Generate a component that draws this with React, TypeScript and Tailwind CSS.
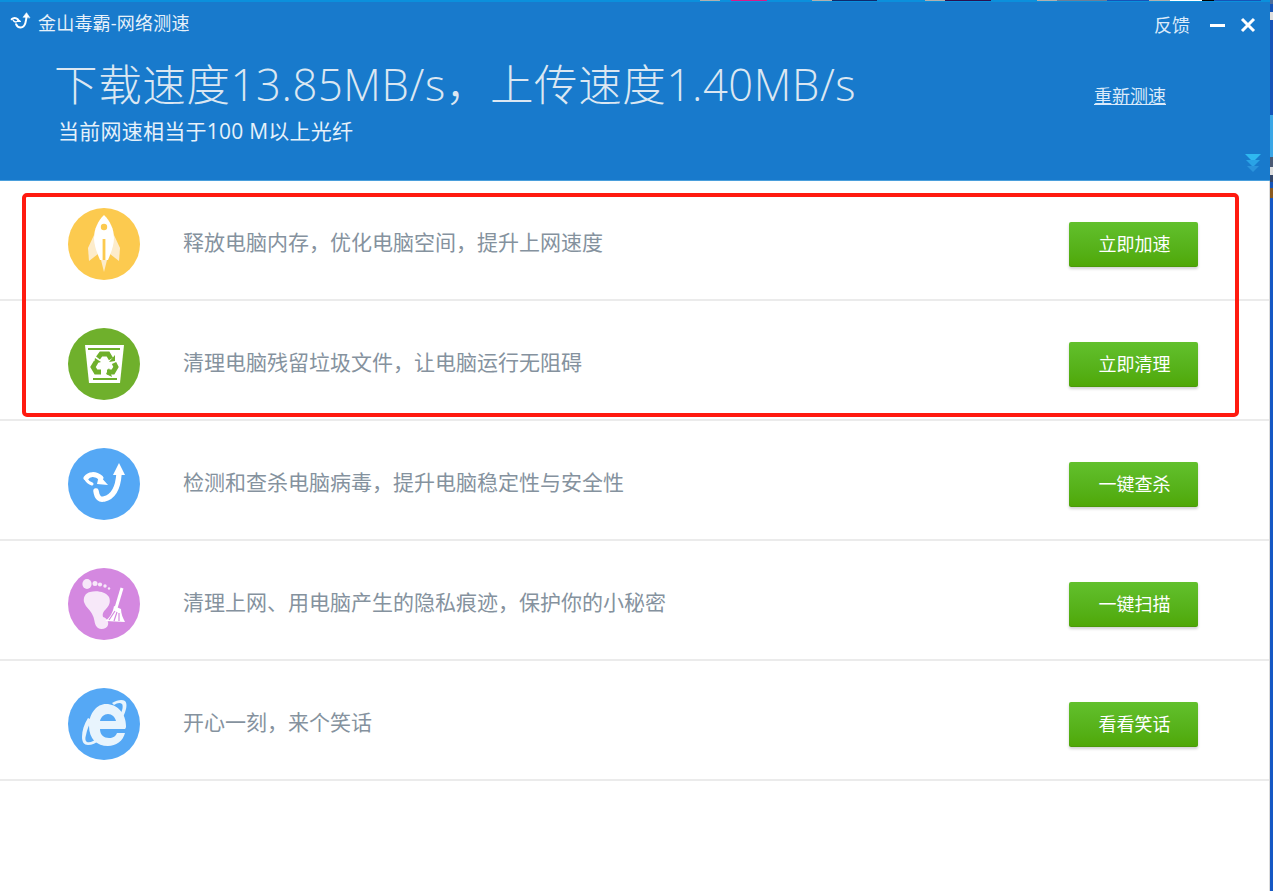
const FONT = "font-['Open_Sans','Noto_Sans_CJK_SC',sans-serif]";

function LogoMark({ className }: { className: string }) {
  return (
    <svg viewBox="0 0 40 40" className={className} fill="none" stroke="currentColor" strokeLinecap="round" strokeLinejoin="round">
      <path d="M3 15c3-3 8-3 11 0" strokeWidth="3.6" />
      <path d="M14 15l5 4-7 0" strokeWidth="2" fill="currentColor" />
      <path d="M6 17c1 2 3 3 5 3" strokeWidth="2.6" />
      <path d="M11 24c3 8 14 9 17-2 1-4 2-8 2-13" strokeWidth="3.6" />
      <path d="M24 11l6-8 6 9z" fill="currentColor" strokeWidth="1" />
    </svg>
  );
}

function RocketIcon() {
  return (
    <svg viewBox="0 0 72 72" className="h-full w-full">
      <path d="M26 27l-6 13 1 13 9-7z" fill="#fdeccb" />
      <path d="M46 27l6 13-1 13-9-7z" fill="#fdeccb" />
      <path d="M33 52h6l-3 12z" fill="#fdeccb" />
      <path d="M36 7c-6 6-10 14-10 23 0 7 3 15 6 22h8c3-7 6-15 6-22 0-9-4-17-10-23z" fill="#fff" />
      <circle cx="36" cy="19" r="3.2" fill="#fcca4f" />
      <rect x="34.6" y="31" width="2.8" height="21" fill="#fcca4f" />
    </svg>
  );
}

function TrashIcon() {
  return (
    <svg viewBox="0 0 72 72" className="h-full w-full">
      <path d="M17 17h39l-4 38H21z" fill="#fff" />
      <rect x="20" y="20" width="32" height="2" fill="#6fb02c" />
      <rect x="25" y="50" width="24" height="2" fill="#6fb02c" />
      <g transform="translate(0 -2)">
        <g fill="none" stroke="#6fb02c" strokeWidth="4.8">
          <path d="M30 32l3-4h7l3 5" />
          <path d="M46 37l2 4-3 5h-6" />
          <path d="M33 46h-5l-3-5 3-5" />
        </g>
        <g fill="#6fb02c">
          <path d="M41 36l6-1 0-6z" />
          <path d="M41 42l-3 6 6 3z" />
          <path d="M27 32l6 4-7 2z" />
        </g>
      </g>
    </svg>
  );
}

function HookIcon() {
  return (
    <svg viewBox="0 0 72 72" className="h-full w-full text-white">
      <g fill="none" stroke="currentColor" strokeLinecap="round">
        <path d="M18 30c3-4 9-5 15 0" strokeWidth="5" />
        <path d="M18 31c1 2 3 4 6 5" strokeWidth="3" />
        <path d="M28 43c1 7 4 9 8 8 9-2 14-11 15-25" strokeWidth="5.4" />
      </g>
      <path d="M31 27l9 10-11-1z" fill="currentColor" />
      <path d="M45 27l6-12 6 12z" fill="currentColor" />
    </svg>
  );
}

function FootIcon() {
  return (
    <svg viewBox="0 0 72 72" className="h-full w-full">
      <g fill="#f7e8f9">
        <path d="M22 24c7-2 16 0 19 5 2 5 0 9-3 12-3 3-4 5-3 8 4 1 6 5 5 8-1 4-7 5-10 3-4-3-3-8-5-12-2-6-7-8-9-14-1-4 1-9 6-10z" />
        <ellipse cx="19" cy="16" rx="4.6" ry="5" />
        <circle cx="27" cy="15.5" r="2.5" />
        <circle cx="32" cy="16.5" r="2.1" />
        <circle cx="37" cy="18" r="1.7" />
        <circle cx="41" cy="20.5" r="1.2" />
      </g>
      <path d="M54 20l-6 20" stroke="#fff" strokeWidth="3" />
      <path d="M46 38l7 3c0 5 2 9 4 13l-20-1c5-3 8-9 9-15z" fill="#fff" />
      <path d="M47 43l-6 9M49 44l-3 9M51 45l0 8" stroke="#d488e0" strokeWidth="1.2" />
    </svg>
  );
}

function IeIcon() {
  return (
    <svg viewBox="0 0 72 72" className="h-full w-full">
      <path d="M20 30c-4 6-6 13-6 19 0 5 2 8 6 8 4 0 8-2 12-5l-2-2c-4 3-8 5-11 4-2-1-2-4-1-7 1-5 3-11 6-15z" fill="#e8f4fd" />
      <path d="M44 15c5-3 10-4 13-2 3 3 1 10-2 16l-2-4c2-4 2-8 1-9-2-2-5-1-8 1z" fill="#e8f4fd" />
      <path
        fillRule="evenodd"
        d="M38 16c11 0 20 9 20 22 0 1 0 2-1 3H32c0 6 4 9 9 9 4 0 7-2 8-5h8c-2 8-9 13-17 13-11 0-19-7-19-20 0-13 8-22 17-22zM32 33h16c-1-4-4-7-8-7-4 0-7 3-8 7z"
        fill="#e8f4fd"
      />
    </svg>
  );
}

const rows = [
  { id: 1, bg: "bg-[#fcca4f]", icon: <RocketIcon />, text: "释放电脑内存，优化电脑空间，提升上网速度", button: "立即加速" },
  { id: 2, bg: "bg-[#6fb02c]", icon: <TrashIcon />, text: "清理电脑残留垃圾文件，让电脑运行无阻碍", button: "立即清理" },
  { id: 3, bg: "bg-[#55a8f5]", icon: <HookIcon />, text: "检测和查杀电脑病毒，提升电脑稳定性与安全性", button: "一键查杀" },
  { id: 4, bg: "bg-[#d488e0]", icon: <FootIcon />, text: "清理上网、用电脑产生的隐私痕迹，保护你的小秘密", button: "一键扫描" },
  { id: 5, bg: "bg-[#55a8f5]", icon: <IeIcon />, text: "开心一刻，来个笑话", button: "看看笑话" },
];

function ActionRow({ bg, icon, text, button }: { bg: string; icon: React.ReactNode; text: string; button: string }) {
  return (
    <div className="flex h-[120px] items-center border-b-2 border-[#ebebeb] pl-[68px] pr-[71px] pt-[8px]">
      <div className={`h-[72px] w-[72px] shrink-0 rounded-full ${bg}`}>{icon}</div>
      <p className="mb-[4px] ml-[43px] flex-1 text-[21px] leading-none text-[#85929e]">{text}</p>
      <button className="h-[45px] w-[129px] rounded-[2px] border-b border-[#4a9a08] bg-gradient-to-b from-[#62c02c] to-[#4fa806] pl-[2px] pt-[1px] text-[18px] text-white shadow-[0_2px_3px_rgba(0,0,0,0.18)]">
        {button}
      </button>
    </div>
  );
}

export default function App() {
  return (
    <div className={`relative flex h-[891px] w-[1273px] overflow-hidden bg-white ${FONT}`}>
      <div className="w-[1270px] border-r border-[#dcdcdc]">
        <header className="relative -mr-px h-[181px] border-t-2 border-b border-t-[#0b90dc] border-b-[#4a9fdc] bg-[#187acc] text-white">
          <div className="flex h-[34px] items-start pl-[10px] pt-[9px]">
            <LogoMark className="h-[22px] w-[22px] text-white" />
            <span className="ml-[6px] text-[18px] leading-[24px] tracking-[0.2px] text-[#e6f1fa]">金山毒霸-网络测速</span>
            <span className="ml-auto mt-[2px] text-[18px] leading-[24px] text-[#dbeafa]">反馈</span>
            <span className="ml-[20px] mt-[13px] h-[3px] w-[15px] bg-white" />
            <svg viewBox="0 0 16 16" className="ml-[15px] mr-[14px] mt-[6px] h-[16px] w-[16px]" stroke="white" strokeWidth="3">
              <path d="M2 2l12 12M14 2L2 14" />
            </svg>
          </div>
          <div className="flex items-start pl-[54px] pr-[104px] pt-[20px]">
            <div>
              <h1 className="text-[43.5px] font-light leading-[58px] tracking-[0.63px] text-[#dbe7f2]">下载速度13.85MB/s，上传速度1.40MB/s</h1>
              <p className="ml-[4px] mt-[3px] text-[21px] leading-[28px] tracking-[0.25px] text-[#e6f1fa]">当前网速相当于100 M以上光纤</p>
            </div>
            <a className="ml-auto mt-[27px] text-[18px] leading-[26px] text-[#dbeafa] underline">重新测速</a>
          </div>
          <svg viewBox="0 0 20 24" className="absolute bottom-[4px] right-[7px] h-[24px] w-[20px]">
            <path d="M2 2h16l-8 8z" fill="#2fb8f0" />
            <path d="M3 8h14l-7 7z" fill="#2aa3e6" />
            <path d="M4 14h12l-6 6z" fill="#2a93dc" />
          </svg>
        </header>
        {rows.map((row) => (
          <ActionRow key={row.id} bg={row.bg} icon={row.icon} text={row.text} button={row.button} />
        ))}
      </div>
      <div className="flex w-[3px] flex-col bg-[#1558c4]">
        <div className="h-[4px] bg-[#4d6f9c]" />
        <div className="h-[8px] bg-[#1554b8]" />
        <div className="h-[8px] bg-[#dedede]" />
        <div className="h-[95px] bg-[#1554b8]" />
        <div className="h-[42px] bg-[#3aa6e6]" />
        <div className="h-[10px] bg-[#4a5a74]" />
        <div className="h-[8px] bg-[#dedede]" />
        <div className="h-[7px] bg-[#34476b]" />
        <div className="h-[6px] bg-[#1554b8]" />
        <div className="h-[10px] bg-[#8a5a20]" />
      </div>
      <div className="absolute right-[12px] top-0 flex h-[1px]">
        <div className="mr-[11px] w-[20px] bg-[#b0b0b0]" />
        <div className="mr-[45px] w-[36px] bg-[#d81b8a]" />
        <div className="w-[20px] bg-[#b0b0b0]" />
        <div className="mr-[48px] w-[45px] bg-[#0e2a6e]" />
        <div className="w-[20px] bg-[#b0b0b0]" />
        <div className="mr-[46px] w-[46px] bg-[#2a1050]" />
        <div className="w-[20px] bg-[#b0b0b0]" />
        <div className="w-[50px] bg-[#6b7f99]" />
        <div className="w-[42px] bg-[#1554b8]" />
        <div className="w-[21px] bg-[#b0b0b0]" />
        <div className="w-[32px] bg-white" />
        <div className="w-[12px] bg-black" />
        <div className="w-[47px] bg-[#1554b8]" />
      </div>
      <div className="pointer-events-none absolute left-[22px] top-[193px] h-[224px] w-[1217px] rounded-[5px] border-[4px] border-[#ff1a0f]" />
    </div>
  );
}
